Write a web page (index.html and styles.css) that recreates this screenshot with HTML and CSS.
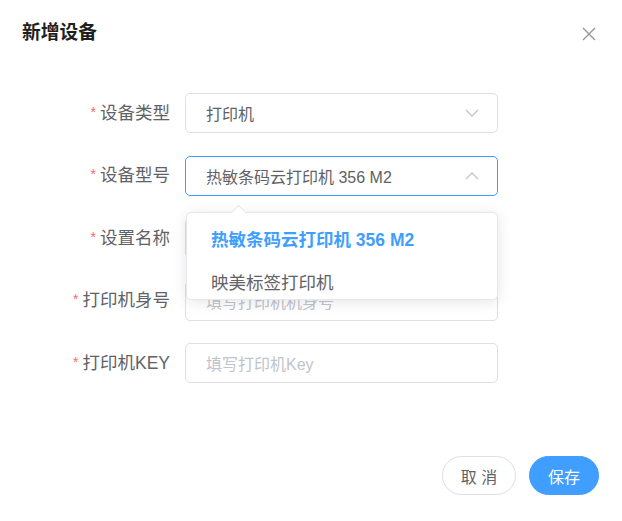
FILE: index.html
```html
<!DOCTYPE html>
<html lang="zh-CN">
<head>
<meta charset="utf-8">
<title>新增设备</title>
<link rel="stylesheet" href="styles.css">
</head>
<body>
<div class="dialog">
  <div class="header">
    <span class="title">新增设备</span>
    <svg class="close" width="14" height="14" viewBox="0 0 14 14"><path d="M1 1L13 13M13 1L1 13" stroke="#909399" stroke-width="1.3" fill="none"/></svg>
  </div>
  <div class="form">
    <div class="row">
      <label class="label"><span class="star">*</span>设备类型</label>
      <div class="field">
        <div class="input"><span class="value">打印机</span>
          <svg class="chev" width="14" height="8" viewBox="0 0 14 8"><path d="M1 1L7 7L13 1" stroke="#c0c4cc" stroke-width="1.3" fill="none"/></svg>
        </div>
      </div>
    </div>
    <div class="row">
      <label class="label"><span class="star">*</span>设备型号</label>
      <div class="field">
        <div class="input focus"><span class="value">热敏条码云打印机 356 M2</span>
          <svg class="chev" width="14" height="8" viewBox="0 0 14 8"><path d="M1 7L7 1L13 7" stroke="#c0c4cc" stroke-width="1.3" fill="none"/></svg>
        </div>
        <div class="popup">
          <div class="arrow"></div>
          <ul class="list">
            <li class="item selected">热敏条码云打印机 356 M2</li>
            <li class="item">映美标签打印机</li>
          </ul>
        </div>
      </div>
    </div>
    <div class="row">
      <label class="label"><span class="star">*</span>设置名称</label>
      <div class="field">
        <div class="input"></div>
      </div>
    </div>
    <div class="row">
      <label class="label"><span class="star">*</span>打印机身号</label>
      <div class="field">
        <div class="input"><span class="ph">填写打印机机身号</span></div>
      </div>
    </div>
    <div class="row">
      <label class="label"><span class="star">*</span>打印机KEY</label>
      <div class="field">
        <div class="input"><span class="ph">填写打印机Key</span></div>
      </div>
    </div>
  </div>
  <div class="footer">
    <button class="btn cancel">取 消</button>
    <button class="btn primary">保存</button>
  </div>
</div>
</body>
</html>
```

FILE: styles.css
```css
* { box-sizing: border-box; }
html, body {
  margin: 0;
  padding: 0;
  background: #fff;
  font-family: "Liberation Sans", "Noto Sans CJK SC", sans-serif;
  color: #606266;
}
.dialog {
  width: 622px;
  height: 521px;
  position: relative;
}
.header {
  display: flex;
  justify-content: space-between;
  align-items: center;
  padding: 20px 26px 0 22px;
  height: 45px;
}
.title {
  font-size: 18.75px;
  font-weight: bold;
  color: #1f1f1f;
  line-height: 26px;
}
.close { display: block; margin-top: 2px; }
.form {
  margin-top: 48px;
  display: flex;
  flex-direction: column;
  gap: 22.5px;
}
.row {
  display: flex;
  align-items: center;
  height: 40px;
}
.label {
  width: 170px;
  text-align: right;
  font-size: 17.5px;
  color: #606266;
  line-height: 40px;
  white-space: nowrap;
}
.star {
  color: #f56c6c;
  font-size: 14px;
  margin-right: 4px;
  position: relative;
  top: -2px;
}
.field {
  margin-left: 15px;
  width: 313px;
  height: 40px;
  position: relative;
}
.input {
  height: 40px;
  border: 1px solid #dcdfe6;
  border-radius: 5px;
  display: flex;
  align-items: center;
  justify-content: space-between;
  padding: 0 18px 0 20px;
  font-size: 16px;
  background: #fff;
}
.input.focus { border-color: #409eff; }
.value { color: #606266; }
.ph { color: #c0c4cc; }
.chev { display: block; }
.popup {
  position: absolute;
  left: 1px;
  top: calc(100% + 16px);
  width: 312px;
  height: 88px;
  background: #fff;
  border: 1px solid #e4e7ed;
  border-radius: 5px;
  box-shadow: 0 2px 14px rgba(0, 0, 0, 0.1);
  z-index: 5;
}
.arrow {
  position: absolute;
  top: -6px;
  left: 46px;
  width: 11px;
  height: 11px;
  background: #fff;
  border-left: 1px solid #e4e7ed;
  border-top: 1px solid #e4e7ed;
  transform: rotate(45deg);
}
.list {
  list-style: none;
  margin: 0;
  padding: 6px 0 0;
  height: 86px;
  overflow: hidden;
  position: relative;
}
.item {
  height: 43px;
  line-height: 43px;
  padding-left: 24px;
  font-size: 17.5px;
  color: #606266;
}
.item.selected {
  color: #409eff;
  font-weight: bold;
}
.footer {
  position: absolute;
  right: 23px;
  top: 456px;
  display: flex;
  gap: 13px;
}
.btn {
  height: 39px;
  border-radius: 20px;
  font-family: "Liberation Sans", "Noto Sans CJK SC", sans-serif;
  font-size: 16px;
  padding: 0;
  cursor: pointer;
}
.cancel {
  width: 74px;
  background: #fff;
  border: 1px solid #dcdfe6;
  color: #606266;
}
.primary {
  width: 70px;
  background: #409eff;
  border: 1px solid #409eff;
  color: #fff;
}
```
